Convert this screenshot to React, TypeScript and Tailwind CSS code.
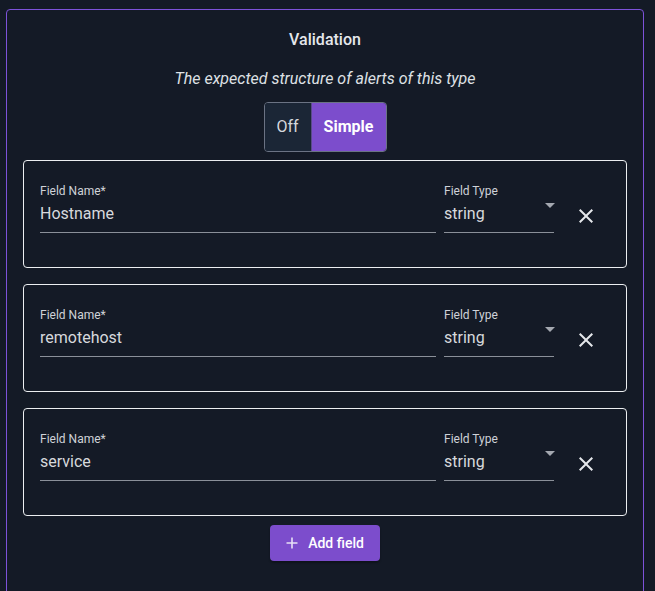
import React from "react";

const fields = ["Hostname", "remotehost", "service"];

function CloseIcon() {
  return (
    <svg width="24" height="24" viewBox="0 0 24 24" className="shrink-0 mt-[21px] ml-[20px]" fill="#e5e7eb">
      <path d="M19 6.41 17.59 5 12 10.59 6.41 5 5 6.41 10.59 12 5 17.59 6.41 19 12 13.41 17.59 19 19 17.59 13.41 12z" />
    </svg>
  );
}

function FieldCard({ name }: { name: string }) {
  return (
    <div className="h-[108px] border border-[#eceef1] rounded-[4px] flex items-start pl-4 pr-[28px] pt-[22px]">
      <div className="flex-1 flex flex-col">
        <div className="text-[12px] leading-[16px] text-[#cfd2d8]">Field Name*</div>
        <div className="mt-[3px] text-[16px] leading-[23px] text-[#d7d9dd] pb-[7px] border-b border-[#8b9099]">{name}</div>
      </div>
      <div className="w-[110px] ml-[8px] flex flex-col relative">
        <div className="text-[12px] leading-[16px] text-[#cfd2d8]">Field Type</div>
        <div className="mt-[3px] text-[16px] leading-[23px] text-[#d7d9dd] pb-[7px] border-b border-[#8b9099]">string</div>
        <svg width="10" height="5" viewBox="0 0 10 5" className="absolute right-[-1px] top-[20px]">
          <polygon points="0,0 10,0 5,5" fill="#a4a8b0" />
        </svg>
      </div>
      <CloseIcon />
    </div>
  );
}

export default function App() {
  return (
    <div
      className="w-[655px] h-[591px] overflow-hidden bg-[#141a26] pt-[9px] pl-[6px] pr-[11px]"
      style={{ fontFamily: "Roboto, 'Noto Sans', sans-serif" }}
    >
      <div className="border border-[#7d52d9] rounded-[4px] min-h-[640px] px-4 pt-[18px] flex flex-col">
        <div className="text-center text-[16px] leading-[24px] font-medium text-[#e5e7eb]">Validation</div>
        <div className="mt-[15px] text-center text-[16px] leading-[24px] italic text-[#dfe1e5]">
          The expected structure of alerts of this type
        </div>
        <div className="mt-[11px] flex justify-center">
          <div className="flex h-[50px] border border-[#6b7384] rounded-[4px] overflow-hidden">
            <div className="w-[46px] bg-[#1b2636] flex items-center justify-center text-[16px] text-[#d5d8dd]">Off</div>
            <div className="w-[75px] bg-[#7c4dcc] border-l border-[#5a4a8a] flex items-center justify-center text-[16px] font-bold text-white">
              Simple
            </div>
          </div>
        </div>
        <div className="mt-[8px] flex flex-col gap-4">
          {fields.map((f) => (
            <FieldCard key={f} name={f} />
          ))}
        </div>
        <div className="mt-[9px] flex justify-center">
          <button className="h-[36px] w-[110px] rounded-[4px] bg-[#7c4dcc] flex items-center justify-center gap-[10px] text-[14px] font-medium text-white shadow-[0_2px_2px_rgba(0,0,0,0.3)]">
            <svg width="12" height="12" viewBox="0 0 12 12">
              <path d="M6 0.5v11M0.5 6h11" stroke="#e6e0f5" strokeWidth="1.6" />
            </svg>
            Add field
          </button>
        </div>
      </div>
    </div>
  );
}
